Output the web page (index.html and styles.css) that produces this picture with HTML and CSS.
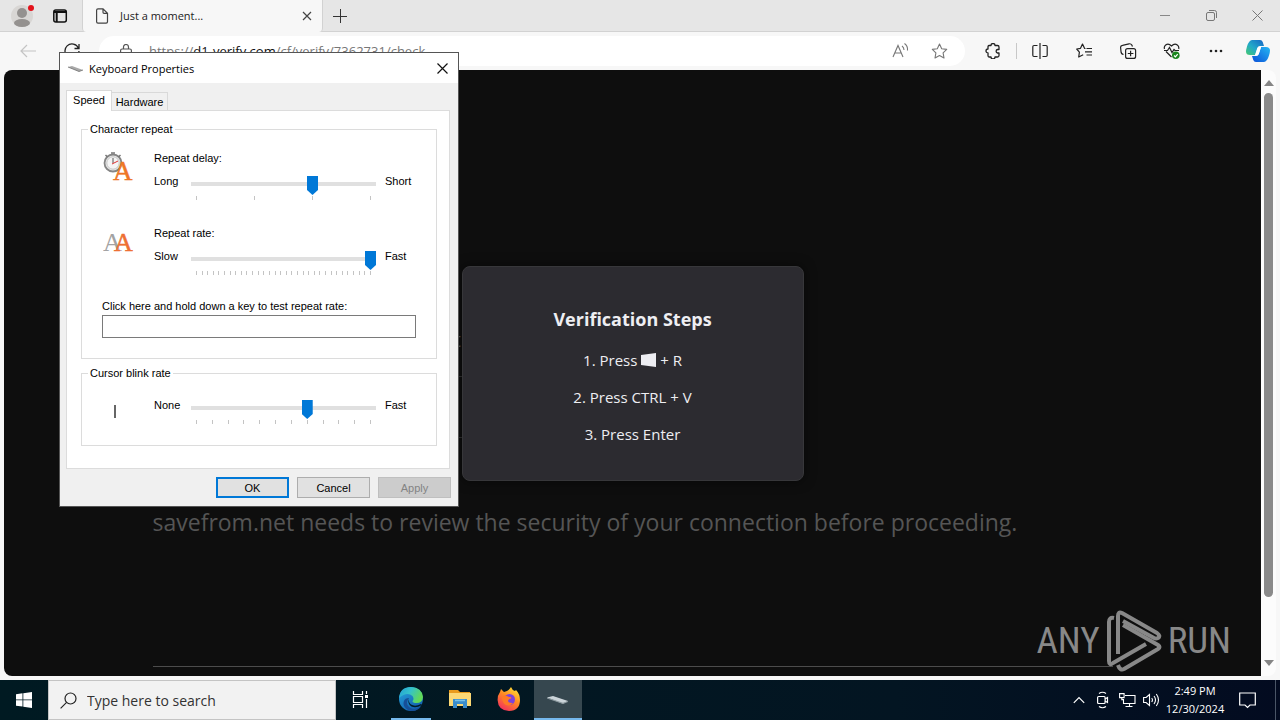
FILE: index.html
```html
<!DOCTYPE html>
<html lang="en">
<head>
<meta charset="utf-8">
<title>Desktop</title>
<link rel="stylesheet" href="styles.css">
</head>
<body>
<div class="desktop">
  <header class="tabstrip">
    <button class="avatar" aria-label="Profile">
      <svg width="26" height="26" viewBox="0 0 26 26"><circle cx="12" cy="13" r="11" fill="#d8d6d4"/><circle cx="12" cy="10" r="5" fill="#94918f"/><ellipse cx="12" cy="20" rx="8" ry="4" fill="#94918f"/><circle cx="21" cy="5" r="3" fill="#e3121b"/></svg>
    </button>
    <button class="tab-actions" aria-label="Tab actions">
      <svg width="16" height="16" viewBox="0 0 16 16" fill="none" stroke="#111"><rect x="1.8" y="2" width="12.5" height="12" rx="2" stroke-width="1.5"/><path d="M2 4h12M4.700 4v10" stroke-width="2"/></svg>
    </button>
    <div class="tab">
      <svg width="14" height="16" viewBox="0 0 14 16" fill="none" stroke="#444" stroke-width="1.2"><path d="M3 .8h5l4.500 4.500v8.500q0 1.400-1.400 1.400H3q-1.400 0-1.400-1.400V2.200Q1.600.8 3 .8zM8 .8v3.500q0 1 1 1h3.500"/></svg>
      <span class="tab-title">Just a moment...</span>
      <button class="tab-close" aria-label="Close tab"><svg width="10" height="10" viewBox="0 0 10 10" stroke="#444" stroke-width="1.2"><path d="M1 1l8 8M9 1l-8 8"/></svg></button>
    </div>
    <button class="new-tab" aria-label="New tab"><svg width="14" height="14" viewBox="0 0 14 14" stroke="#333"><path d="M7.500 0v14M0 7.500h14"/></svg></button>
    <div class="window-controls">
      <button aria-label="Minimize"><svg width="11" height="11" viewBox="0 0 11 11" stroke="#888"><path d="M0 5.500h10"/></svg></button>
      <button aria-label="Restore"><svg width="11" height="11" viewBox="0 0 11 11" fill="none" stroke="#777"><rect x=".5" y="2.500" width="8" height="8" rx="1.500"/><path d="M3 .5h5.500q2 0 2 2V8"/></svg></button>
      <button aria-label="Close"><svg width="11" height="11" viewBox="0 0 11 11" stroke="#777"><path d="M.5.5l10 10M10.500.5l-10 10"/></svg></button>
    </div>
  </header>

  <nav class="toolbar">
    <button class="nav-button" aria-label="Back"><svg width="16" height="14" viewBox="0 0 16 14" fill="none" stroke="#c4c4c4" stroke-width="1.200"><path d="M16 7H1M7 1L1 7l6 6"/></svg></button>
    <button class="nav-button" aria-label="Refresh"><svg width="16" height="16" viewBox="0 0 16 16" fill="none" stroke="#222" stroke-width="1.300"><path d="M15 1v4.500h-4.500M14.500 5.300A7 7 0 1 0 15 8"/></svg></button>
    <div class="address">
      <svg width="12" height="15" viewBox="0 0 12 15" fill="none" stroke="#555" stroke-width="1.200"><rect x=".6" y="5" width="10.800" height="9" rx="1.500"/><path d="M3.500 5V3a2.500 2.500 0 0 1 5 0v2"/></svg>
      <a class="url" href="#">https://<span class="host">d1-verify.com</span>/cf/verify/7362731/check</a>
      <button aria-label="Read aloud"><svg width="17" height="16" viewBox="0 0 17 16" fill="none" stroke="#777" stroke-width="1.100"><path d="M1 14L6 2.500 11 14M2.800 10h6.400M10 3q2 1.500 2 4M12.500.5Q16 3 15.500 7.500"/></svg></button>
      <button aria-label="Favorite"><svg width="17" height="16" viewBox="0 0 17 16" fill="none" stroke="#777" stroke-width="1.100" stroke-linejoin="round"><path d="M8.500 1l2.200 4.700 5 .7-3.600 3.500.9 5.100-4.500-2.400L4 15l.9-5.100L1.300 6.400l5-.7z"/></svg></button>
    </div>
    <div class="tools">
      <button aria-label="Extensions"><svg width="16" height="16" viewBox="0 0 16 16" fill="none" stroke="#222" stroke-width="1.300" stroke-linejoin="round"><path d="M4 2.500h2a2 2 0 0 1 4 0h2.500q1.500 0 1.500 1.500v2.500h-1.500a1.800 1.800 0 0 0 0 3.500H14v2.500q0 1.500-1.500 1.500H10a2 2 0 0 1-4 0H4q-1 0-1-1.500V10a2 2 0 0 1 0-4V4q0-1.500 1-1.500z"/></svg></button>
      <span class="divider"></span>
      <button aria-label="Split screen"><svg width="16" height="16" viewBox="0 0 16 16" fill="none" stroke="#222" stroke-width="1.200"><path d="M8 0v16M5.500 2.500H2q-1.200 0-1.200 1.200v8.600q0 1.200 1.200 1.200h3.500M10.500 2.500H14q1.200 0 1.200 1.200v8.600q0 1.200-1.200 1.200h-3.500"/></svg></button>
      <button aria-label="Favorites"><svg width="17" height="16" viewBox="0 0 17 16" fill="none" stroke="#222" stroke-width="1.200" stroke-linejoin="round"><path d="M9.500 5.500l-1-.2L6.500 1 4.500 5.300.7 6l2.700 3.200-.7 4.800 4.500-2.300M10.500 5.500H16M9 8.800h7M10.500 12H16"/></svg></button>
      <button aria-label="Collections"><svg width="17" height="16" viewBox="0 0 17 16" fill="none" stroke="#222" stroke-width="1.200"><rect x="5.600" y="5.600" width="10" height="9.800" rx="2"/><path d="M10.600 7.700v5.600M7.800 10.500h5.600M3.500 11.500Q1 11 1 8.500L.6 4.500Q.5 2.600 2.500 2.300L9 .8Q11 .5 11.800 2l.7 1.500"/></svg></button>
      <button aria-label="Browser essentials"><svg width="18" height="17" viewBox="0 0 18 17" fill="none" stroke="#222" stroke-width="1.200"><path d="M8.500 14L3 8.500M1.500 6Q.7 3.500 2.700 2 5.500 0 8.500 3 11.500 0 14.300 2q2 1.500 1.400 4M1 7.500h3.500l2-3 2.500 5 2-3 1 1h4"/><circle cx="12.800" cy="12.300" r="3.800" fill="#19841d" stroke="none"/><path d="M11 12.500l1.400 1.300 2.300-2.600" stroke="#fff"/></svg></button>
      <button aria-label="Settings and more"><svg width="14" height="4" viewBox="0 0 14 4" fill="#222"><circle cx="2" cy="2" r="1.300"/><circle cx="7" cy="2" r="1.300"/><circle cx="12" cy="2" r="1.300"/></svg></button>
      <button class="copilot" aria-label="Copilot"><svg width="24" height="24" viewBox="0 0 24 24"><defs><linearGradient id="cpa" x1="0" y1="1" x2="1" y2="0"><stop offset="0" stop-color="#46c96f"/><stop offset=".45" stop-color="#22a9c9"/><stop offset="1" stop-color="#1664c5"/></linearGradient><linearGradient id="cpb" x1="0" y1="1" x2="1" y2="0"><stop offset="0" stop-color="#0b50d8"/><stop offset="1" stop-color="#25b7f3"/></linearGradient></defs><path d="M6 1h8q2 0 2.700 2L18 7h-4q-2 0-2.700 2L9 16H4Q0 16 0 12.500q0-1.500 1-5Q3 1 6 1z" fill="url(#cpa)"/><path d="M18 23h-8q-2 0-2.700-2L6 17h4q2 0 2.700-2L15 8h5q4 0 4 3.500 0 1.500-1 5Q21 23 18 23z" fill="url(#cpb)"/><path d="M11.500 9Q12 7.500 14 7.500h1.300L12.800 15q-.6 1.800-2.500 1.800H9z" fill="#fff"/></svg></button>
    </div>
  </nav>

  <main class="viewport">
    <div class="page">
      <div class="content">
        <p class="subtitle">Verify you are human by completing</p>
        <div class="widget"></div>
        <p class="review">savefrom.net needs to review the security of your connection before proceeding.</p>
        <hr class="rule">
      </div>
      <div class="overlay">
        <section class="steps">
          <h1>Verification Steps</h1>
          <p>1. Press <svg class="win-key" width="15" height="14" viewBox="0 0 15 14" fill="#eeeef2"><path d="M0 2l15-2v14L0 12z"/></svg> + R</p>
          <p>2. Press CTRL + V</p>
          <p>3. Press Enter</p>
        </section>
      </div>
      <div class="watermark">
        <span>ANY</span>
        <svg width="56" height="62" viewBox="0 0 56 62" fill="none" stroke="#888" stroke-width="4" stroke-linejoin="round" stroke-linecap="butt"><path d="M8 8Q3 7 3 12v39q0 5 4 2l33-19"/><path d="M12 44V6q0-5 4-3l35 20q4 3 1 5-2 1-4 0L17 11"/><path d="M12 55q2 6 6 4l34-20q3-2 0-4L17 15"/></svg>
        <span>RUN</span>
      </div>
    </div>
    <div class="scrollbar">
      <svg width="10" height="6" viewBox="0 0 10 6" fill="#858585"><path d="M0 6l5-6 5 6z"/></svg>
      <div class="scroll-thumb"></div>
      <svg width="10" height="6" viewBox="0 0 10 6" fill="#858585"><path d="M0 0l5 6 5-6z"/></svg>
    </div>
  </main>

  <footer class="taskbar">
    <button class="start" aria-label="Start"><svg width="16" height="16" viewBox="0 0 16 16" fill="#fff"><path d="M0 2.200l6.500-.9v6.200H0zM7.300 1.200L16 0v7.500H7.300zM0 8.300h6.500v6.300L0 13.700zM7.300 8.300H16V16l-8.700-1.300z"/></svg></button>
    <label class="search">
      <svg width="17" height="17" viewBox="0 0 17 17" fill="none" stroke="#222" stroke-width="1.200"><circle cx="10.500" cy="6.500" r="5.500"/><path d="M6.600 10.400L.6 16.400"/></svg>
      <input type="text" placeholder="Type here to search" aria-label="Search">
    </label>
    <button class="task" aria-label="Task view"><svg width="17" height="17" viewBox="0 0 17 17" fill="none" stroke="#fff" stroke-width="1.200"><path d="M1.500 0v3.500h9V0M1.500 17v-3.500h9V17M1.500 5.500h9v6h-9zM14.500 0v3M14.500 8v9"/><path d="M13 4h3v3h-3z" fill="#fff" stroke="none"/></svg></button>
    <button class="task running" aria-label="Microsoft Edge"><svg width="24" height="24" viewBox="0 0 24 24"><defs><linearGradient id="eg" x1="0" y1="0" x2="1" y2=".4"><stop offset="0" stop-color="#229fd7"/><stop offset=".5" stop-color="#35c3ca"/><stop offset="1" stop-color="#62d957"/></linearGradient><linearGradient id="eb" x1="0" y1="0" x2=".6" y2="1"><stop offset="0" stop-color="#28a9e1"/><stop offset="1" stop-color="#1260ae"/></linearGradient></defs><circle cx="12" cy="12" r="12" fill="url(#eb)"/><path d="M0 11Q1 0 12 0q11 .5 12 10-.5 6-6.500 6-4 0-4-2 2-2 0-5Q8 4 0 11z" fill="url(#eg)"/><path d="M10 11q-4 5 0 9 5 4 12-.5Q17 26 9 23q-6-4-4-9 1-3 5-3z" fill="#164f98"/><path d="M10 11q-1 4 2 6.500 4 2.500 10-.5l1 1q-6 3.500-10.500 1.500Q8 17 10 11z" fill="#021b25"/></svg></button>
    <button class="task" aria-label="File Explorer"><svg width="22" height="20" viewBox="0 0 22 20"><path d="M0 1h9l2 2h10v14H0z" fill="#e99b1c"/><path d="M0 4h22v13H0z" fill="#fcd874"/><path d="M4 10h14v9h-4v-4H8v4H4z" fill="#3b8dcc"/><path d="M6 11.500h10" stroke="#79c3ea" stroke-width="1.500"/></svg></button>
    <button class="task" aria-label="Firefox"><svg width="24" height="24" viewBox="0 0 24 24"><defs><linearGradient id="ff" x1=".8" y1="0" x2=".2" y2="1"><stop offset="0" stop-color="#ffe437"/><stop offset=".45" stop-color="#ff8a23"/><stop offset="1" stop-color="#f32a62"/></linearGradient></defs><path d="M3 5l1-3 3 3 3-1q2-1 4-4 1 3 4 4l1-1q4 4 4 10 0 10.500-11 11Q1 23.500.6 13 .6 8 3 5z" fill="url(#ff)"/><circle cx="12.500" cy="12.500" r="5.500" fill="#7b42dc"/><path d="M5 10q3-3 7 0 3-.5 2 1.500-3 .5-3 2.500 1 2.500 5 2-3 4-8 1.500Q5 15 5 10z" fill="#ff7a26"/></svg></button>
    <button class="task active" aria-label="Keyboard Properties"><svg width="22" height="10" viewBox="0 0 22 10"><path d="M0 3.500L6 2l15 5-5 2.800z" fill="#cbd4d9"/><path d="M0 3.500l16 5.300 5-1.800v1l-5 2L0 4.500z" fill="#8c999f"/></svg></button>
    <div class="tray">
      <button aria-label="Show hidden icons"><svg width="12" height="8" viewBox="0 0 12 8" fill="none" stroke="#fff" stroke-width="1.200"><path d="M.8 6.800L6 1.500l5.200 5.300"/></svg></button>
      <button aria-label="Camera"><svg width="14" height="18" viewBox="0 0 14 18" fill="none" stroke="#fff" stroke-width="1.200"><rect x="1.600" y="5.500" width="7.500" height="7" rx="1"/><path d="M9 8l2.500-1.500v5L9 10M3 2.500q3.500-2.500 7 0M3 15.500q3.500 2.500 7 0"/></svg></button>
      <button aria-label="Network"><svg width="17" height="15" viewBox="0 0 17 15" fill="none" stroke="#fff" stroke-width="1.100"><path d="M6 2.500h10v8H4.500V6M10.500 10.500v3M6.500 13.500h7M.6.600h4.500v4H.6zM2.800 4.600v2h2"/></svg></button>
      <button aria-label="Volume"><svg width="17" height="14" viewBox="0 0 17 14" fill="none" stroke="#fff" stroke-width="1.100"><path d="M.6 4.500h2.500L6.500 1.500v11l-3.400-3H.6zM8.700 5q1.500 2 0 4M11 3q3 4 0 8M13.300 1q4.400 6 0 12"/></svg></button>
      <div class="clock"><time>2:49 PM</time><time>12/30/2024</time></div>
      <button class="notify" aria-label="Notifications"><svg width="17" height="17" viewBox="0 0 17 17" fill="none" stroke="#fff" stroke-width="1.200"><path d="M.7 1h15.600v12H11l-2.500 2.500L6 13H.7z"/></svg></button>
      <span class="peek"></span>
    </div>
  </footer>

  <section class="dialog" role="dialog" aria-labelledby="dialog-title">
    <header class="titlebar">
      <svg width="15" height="8" viewBox="0 0 15 8"><path d="M0 3l4-1 11 4-4 1.500z" fill="#a9a9a9"/><path d="M0 3l11 4.500L15 6" fill="none" stroke="#707070" stroke-width=".8"/></svg>
      <h2 id="dialog-title">Keyboard Properties</h2>
      <button aria-label="Close dialog"><svg width="11" height="11" viewBox="0 0 11 11" stroke="#111" stroke-width="1.200"><path d="M.5.500l10 10M10.500.5l-10 10"/></svg></button>
    </header>
    <div class="tabs" role="tablist">
      <button class="tab-selected" role="tab" aria-selected="true">Speed</button>
      <button role="tab" aria-selected="false">Hardware</button>
    </div>
    <div class="panel">
      <fieldset class="repeat">
        <legend>Character repeat</legend>
        <div class="setting">
          <svg class="setting-icon" width="32" height="34" viewBox="0 0 32 34"><circle cx="10" cy="12" r="8.500" fill="#e8e8e8" stroke="#858585" stroke-width="1.800"/><circle cx="10" cy="12" r="6.200" fill="#f5f5f5" stroke="#bbb" stroke-width=".8"/><path d="M8 2h4M2.500 4l2 2M17.500 4l-2 2" stroke="#777" stroke-width="1.500"/><path d="M10 7v5" stroke="#555"/><path d="M9 13l6-3" stroke="#d33"/><text x="10" y="29" font-family="Liberation Serif, serif" font-size="27" fill="#ee7726" stroke="#ee7726" stroke-width=".5">A</text></svg>
          <label class="setting-name" for="delay">Repeat delay:</label>
          <span class="low">Long</span>
          <input id="delay" type="range" min="0" max="3" value="2">
          <span class="high">Short</span>
          <div class="ticks"><i></i><i></i><i></i><i></i></div>
        </div>
        <div class="setting">
          <svg class="setting-icon" width="32" height="34" viewBox="0 0 32 34" font-family="Liberation Serif, serif" font-size="26"><text x="0" y="25" fill="#a3a3a3">A</text><text x="11" y="25" fill="#ee7033" stroke="#ee7033" stroke-width=".5">A</text></svg>
          <label class="setting-name" for="rate">Repeat rate:</label>
          <span class="low">Slow</span>
          <input id="rate" type="range" min="0" max="31" value="31">
          <span class="high">Fast</span>
          <div class="ticks"><i></i><i></i><i></i><i></i><i></i><i></i><i></i><i></i><i></i><i></i><i></i><i></i><i></i><i></i><i></i><i></i><i></i><i></i><i></i><i></i><i></i><i></i><i></i><i></i><i></i><i></i><i></i><i></i><i></i><i></i><i></i><i></i></div>
        </div>
        <label class="test-label" for="test">Click here and hold down a key to test repeat rate:</label>
        <input class="test-input" id="test" type="text">
      </fieldset>
      <fieldset class="blink">
        <legend>Cursor blink rate</legend>
        <div class="setting">
          <span class="caret"></span>
          <span class="low">None</span>
          <input id="blink" type="range" min="0" max="11" value="7" aria-label="Cursor blink rate">
          <span class="high">Fast</span>
          <div class="ticks"><i></i><i></i><i></i><i></i><i></i><i></i><i></i><i></i><i></i><i></i><i></i><i></i></div>
        </div>
      </fieldset>
    </div>
    <div class="actions">
      <button class="default">OK</button>
      <button>Cancel</button>
      <button disabled>Apply</button>
    </div>
  </section>
</div>
</body>
</html>
```
FILE: styles.css
```css
* { box-sizing: border-box; }
body { margin: 0; font-family: "Open Sans", "Noto Sans", sans-serif; font-size: 12px; color: #222; }
button { margin: 0; padding: 0; border: 0; background: none; font: inherit; color: inherit; display: flex; align-items: center; justify-content: center; }
svg { display: block; flex: none; }
p, h1, h2 { margin: 0; }

.desktop { position: relative; display: flex; flex-direction: column; height: 100vh; overflow: hidden; background: #f7f7f7; }

.tabstrip { display: flex; align-items: center; height: 32px; background: #e6e6e6; border-bottom: 1px solid #d2d2d2; }
.avatar { width: 44px; height: 32px; padding-left: 2px; }
.tab-actions { width: 32px; height: 32px; }
.tab { display: flex; align-items: center; width: 241px; height: 32px; margin-left: 6px; padding: 0 10px 0 12px; background: #f7f7f7; border: 1px solid #d2d2d2; border-width: 0 1px; border-radius: 0 0 4px 4px; }
.tab-title { flex: 1; padding-left: 11px; font-size: 11px; }
.tab-close { width: 11px; height: 16px; }
.new-tab { width: 32px; height: 32px; margin-left: 1px; }
.window-controls { display: flex; margin-left: auto; }
.window-controls button { width: 46px; height: 32px; }

.toolbar { display: flex; align-items: center; height: 38px; }
.nav-button { width: 44px; height: 36px; }
.nav-button:first-child { margin-left: 6px; }
.address { display: flex; align-items: center; flex: 1; height: 30px; margin-left: 5px; margin-right: 6px; padding: 0 6px 0 21px; border-radius: 15px; background: #fff; }
.url { flex: 1; padding-left: 17px; font-size: 13px; color: #777; text-decoration: none; }
.host { color: #111; }
.address button { width: 39px; height: 30px; }
.tools { display: flex; align-items: center; }
.tools button { width: 44px; height: 36px; }
.tools .copilot { width: 42px; padding-right: 2px; }
.divider { width: 1px; height: 16px; margin: 0 1px; background: #c8c8c8; }

.viewport { display: flex; flex: 1; min-height: 0; padding: 0 4px 4px; }
.page { position: relative; flex: 1; overflow: hidden; border-radius: 8px 0 0 8px; background: #0e0e0e; }
.content { max-width: 960px; margin: 0 auto; padding-top: 254px; color: #555; font-size: 23px; line-height: 32px; }
.subtitle { font-size: 20px; }
.widget { width: 340px; height: 62px; margin: 20px 0 68px; border: 1px solid #333; }
.rule { margin: 128px 0 0; border: 0; border-top: 1px solid #4c4c4c; }
.overlay { position: absolute; inset: 0; display: flex; align-items: center; justify-content: center; }
.steps { width: 342px; padding: 40px 20px 20px; border: 1px solid #37373a; border-radius: 8px; background: #2c2b30; color: #eeeef2; text-align: center; box-shadow: 0 0 12px #0008; }
.steps h1 { margin-bottom: 18px; font-size: 18px; line-height: 24px; font-weight: 700; }
.steps p { margin-bottom: 15px; font-size: 15px; line-height: 22px; }
.win-key { display: inline-block; vertical-align: -1px; }
.watermark { position: absolute; right: 30px; bottom: 4px; display: flex; align-items: center; gap: 6px; color: #888; font-family: "Liberation Sans Narrow", "Roboto Condensed", Roboto, sans-serif; font-size: 37px; line-height: 62px; }

.scrollbar { display: flex; flex-direction: column; align-items: center; gap: 7px; width: 15px; padding: 10px 0; background: #fcfcfc; border-radius: 0 8px 8px 0; }
.scroll-thumb { width: 9px; height: 504px; border-radius: 5px; background: #8a8a8a; }
.scrollbar svg:last-child { margin-top: auto; }

.taskbar { display: flex; height: 40px; background: linear-gradient(90deg, #001a22, #031522 70%, #030b20); color: #fff; }
.start { width: 48px; }
.search { display: flex; align-items: center; gap: 10px; width: 288px; padding-left: 11px; border: 1px solid #c4c4c4; background: #f2f2f2; }
.search input { flex: 1; min-width: 0; padding: 0; border: 0; background: none; font: 14px "Open Sans", sans-serif; outline: 0; }
.search input::placeholder { color: #333; opacity: 1; }
.task { width: 48px; margin-right: 1px; border-bottom: 2px solid transparent; }
.task.running { margin-left: 2px; background: linear-gradient(#76b9ed, #76b9ed) center bottom / 40px 2px no-repeat border-box; }
.task.active { background: #36474f; border-bottom-color: #76b9ed; }
.tray { display: flex; margin-left: auto; }
.tray button { width: 24px; }
.clock { display: flex; flex-direction: column; justify-content: center; width: 64px; text-align: center; font-size: 11px; line-height: 18px; }
.tray .notify { width: 40px; }
.peek { width: 5px; margin-left: 8px; border-left: 1px solid #4a5566; }

.dialog { position: absolute; left: 59px; top: 52px; width: 400px; border: 1px solid #555; background: #f0f0f0; color: #000; font-family: "Liberation Sans", Arial, sans-serif; font-size: 11px; }
.titlebar { display: flex; align-items: center; height: 30px; padding: 0 10px 0 8px; background: #fff; }
.titlebar h2 { flex: 1; padding-left: 6px; font: 11px "Open Sans", sans-serif; }
.titlebar button { width: 12px; height: 20px; }
.tabs { display: flex; align-items: flex-end; height: 27px; padding-left: 6px; }
.tabs button { width: 56px; height: 18px; border: 1px solid #d9d9d9; border-bottom: 0; border-left: 0; }
.tabs .tab-selected { position: relative; width: 46px; height: 21px; margin-bottom: -1px; padding-bottom: 2px; border-left: 1px solid #d9d9d9; background: #fff; }
.panel { margin: 0 8px 0 6px; padding: 12px 12px 22px 14px; border: 1px solid #dcdcdc; background: #fff; }
fieldset { min-width: 0; margin: 0; border: 1px solid #dcdcdc; padding: 15px 20px 20px; }
legend { margin-left: -14px; padding: 0 2px; line-height: 13px; }
.setting { position: relative; display: grid; grid-template-columns: 52px 37px 185px 1fr; }
.setting-icon { grid-column: 1; grid-row: 1 / span 3; margin-left: 1px; }
.setting-name { grid-column: 2 / span 3; height: 25px; line-height: 14px; }
.low, .high { line-height: 10px; }
.low { grid-column: 2; }
.high { padding-left: 9px; }
.ticks { grid-column: 3; display: flex; justify-content: space-between; height: 4px; margin: 1px 5px 0; }
.ticks i { width: 1px; background: #c4c4c4; }
.repeat .setting { margin-bottom: 24px; }
.repeat .setting:first-of-type { margin-bottom: 26px; }
input[type="range"] { appearance: none; -webkit-appearance: none; width: 185px; height: 19px; margin: 0; background: linear-gradient(#e0e0e0, #e0e0e0) 0 6px / 100% 4px no-repeat; outline: 0; }
input[type="range"]::-webkit-slider-thumb { -webkit-appearance: none; width: 11px; height: 19px; background: #0078d7; clip-path: polygon(0 0, 100% 0, 100% 14px, 50% 100%, 0 14px); }
.test-label { display: block; line-height: 14px; margin-bottom: 2px; }
.test-input { display: block; width: 100%; height: 23px; border: 1px solid #7a7a7a; background: #fff; }
.blink { margin-top: 8px; padding-bottom: 21px; padding-top: 20px; }
.caret { grid-row: 1 / span 2; width: 2px; height: 13px; margin: 5px 0 0 12px; background: #666; }
.actions { display: flex; justify-content: flex-end; gap: 8px; padding: 8px 7px 8px; }
.actions button { width: 73px; height: 21px; border: 1px solid #adadad; background: #e1e1e1; }
.actions .default { border: 2px solid #0078d7; }
.actions button:disabled { border-color: #bfbfbf; background: #ccc; color: #838383; }
```
